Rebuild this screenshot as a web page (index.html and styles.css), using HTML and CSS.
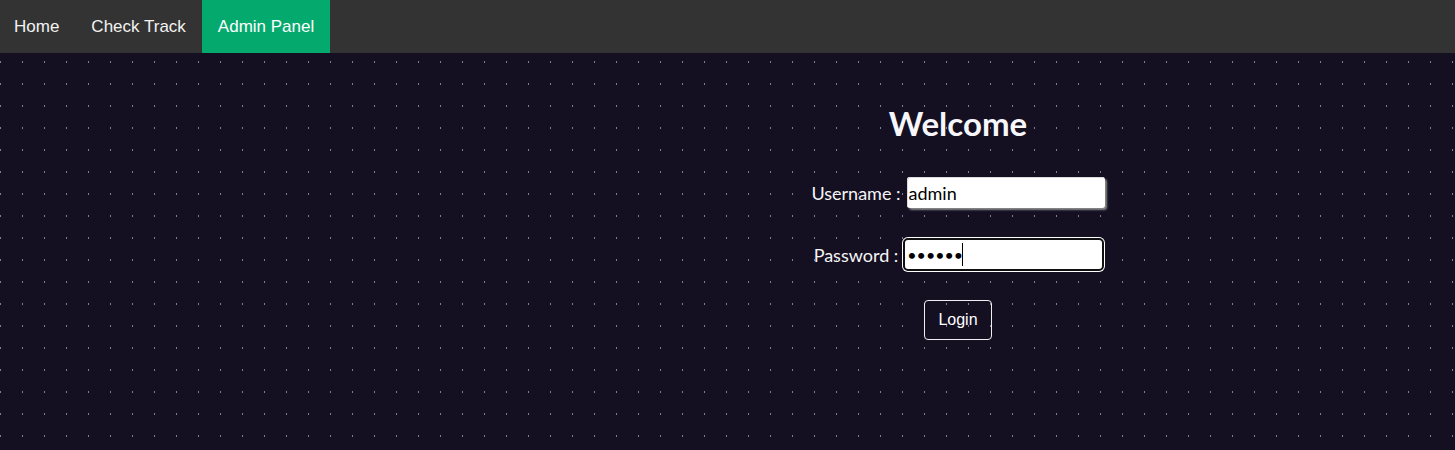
FILE: index.html
```html
<!DOCTYPE html>
<html lang="en">
<head>
<meta charset="utf-8">
<title>Admin Panel</title>
<link rel="stylesheet" href="styles.css">
</head>
<body>
<nav class="topnav">
  <a href="#" class="nav-link">Home</a>
  <a href="#" class="nav-link">Check Track</a>
  <a href="#" class="nav-link active">Admin Panel</a>
</nav>
<main class="main">
  <form class="login" onsubmit="return false">
    <h1 class="title">Welcome</h1>
    <div class="row row-user">
      <label class="label" for="user">Username :</label>
      <input class="field field-user" id="user" type="text" value="admin">
    </div>
    <div class="row row-pass">
      <label class="label" for="pass">Password :</label>
      <span class="pass-wrap">
        <input class="field field-pass" id="pass" type="password" value="123456">
        <span class="caret"></span>
      </span>
    </div>
    <div class="row row-btn">
      <button class="btn" type="submit">Login</button>
    </div>
  </form>
</main>
</body>
</html>
```
FILE: styles.css
```css
html, body {
  margin: 0;
  padding: 0;
  height: 100%;
}
body {
  background-color: #141022;
  background-image: radial-gradient(ellipse 1px 1.4px at 0.5px 1px, #847a9e 60%, rgba(20,16,34,0) 100%);
  background-size: 22px 22px;
  background-position: 0 17px;
  font-family: Lato, "Open Sans", sans-serif;
  color: #f5f5f5;
  overflow: hidden;
}
.topnav {
  display: flex;
  height: 53px;
  background: #333333;
}
.nav-link {
  display: block;
  padding: 0 16px;
  line-height: 53px;
  font-family: "Liberation Sans", Arial, sans-serif;
  font-size: 17px;
  color: #f2f2f2;
  text-decoration: none;
}
.nav-link:first-child {
  padding-left: 14px;
}
.nav-link.active {
  background: #04aa6d;
  color: #ffffff;
}
.main {
  padding-left: 461px;
}
.login {
  display: flex;
  flex-direction: column;
  align-items: center;
}
.title {
  margin: 50px 0 0;
  font-size: 33px;
  font-weight: 700;
  line-height: 40px;
  color: #f7f7fb;
}
.row {
  display: flex;
  align-items: center;
  justify-content: center;
}
.row-user {
  margin-top: 34px;
}
.row-pass {
  margin-top: 32px;
}
.row-btn {
  margin-top: 31px;
}
.label {
  font-size: 18px;
  color: #f5f5f5;
  margin-right: 6px;
}
.field {
  box-sizing: border-box;
  width: 200px;
  height: 31px;
  padding: 0 2px;
  border: none;
  border-radius: 3px;
  background: #ffffff;
  font-family: Lato, sans-serif;
  font-size: 18px;
  color: #000;
  caret-color: #000;
}
.field:focus {
  outline: none;
}
.field-user {
  width: 198px;
  box-shadow: 1px 1px 0 #dcdcdc inset, 2px 2px 2px #8a8a8a;
}
.pass-wrap {
  position: relative;
  display: block;
  margin-left: 1px;
}
.field-pass {
  display: block;
  width: 197px;
  height: 29px;
  outline: 2px solid #101010;
  outline-offset: 0;
  box-shadow: 0 0 0 3px #ffffff;
  font-size: 16px;
}
.field-pass:focus {
  outline: 2px solid #101010;
}
.caret {
  position: absolute;
  left: 57px;
  top: 3px;
  width: 1px;
  height: 23px;
  background: #000;
}
.btn {
  padding: 10px 13px;
  background: transparent;
  border: 1px solid #f0f0f0;
  border-radius: 4px;
  font-family: "Liberation Sans", Arial, sans-serif;
  font-size: 16px;
  color: #ffffff;
  cursor: pointer;
}
```
